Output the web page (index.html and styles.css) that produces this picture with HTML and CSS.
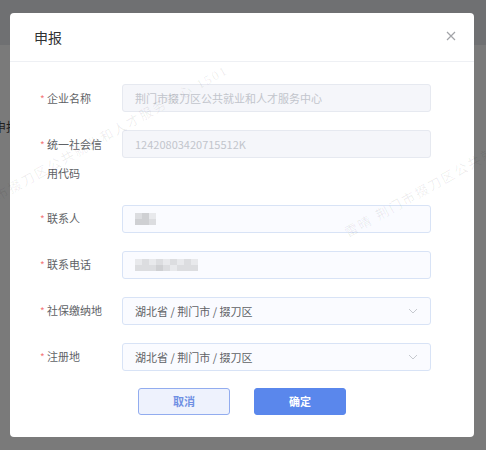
FILE: index.html
```html
<!DOCTYPE html>
<html lang="zh-CN">
<head>
<meta charset="utf-8">
<title>申报</title>
<link rel="stylesheet" href="styles.css">
</head>
<body>
<div class="page">
  <div class="page-header"></div>
  <div class="page-body">
    <span class="page-text">申报</span>
  </div>
</div>

<div class="dialog">
  <div class="dialog-header">
    <span class="dialog-title">申报</span>
    <svg class="close" width="10" height="10" viewBox="0 0 10 10"><path d="M1 1L9 9M9 1L1 9" stroke="#a2a4a8" stroke-width="1.2" fill="none"/></svg>
  </div>
  <div class="dialog-body">
    <div class="form-item">
      <div class="label"><span class="star">*</span><span class="label-text">企业名称</span></div>
      <div class="control"><div class="input disabled">荆门市掇刀区公共就业和人才服务中心</div></div>
    </div>
    <div class="form-item">
      <div class="label"><span class="star">*</span><span class="label-text">统一社会信用代码</span></div>
      <div class="control"><div class="input disabled">12420803420715512K</div></div>
    </div>
    <div class="form-item">
      <div class="label"><span class="star">*</span><span class="label-text">联系人</span></div>
      <div class="control"><div class="input">
        <div class="mosaic">
          <i class="m2"></i><i class="m1"></i><i class="m3"></i>
          <i class="m1"></i><i class="m1"></i><i class="m2"></i>
        </div>
      </div></div>
    </div>
    <div class="form-item">
      <div class="label"><span class="star">*</span><span class="label-text">联系电话</span></div>
      <div class="control"><div class="input">
        <div class="mosaic wide">
          <i class="m3"></i><i class="m2"></i><i class="m3"></i><i class="m2"></i><i class="m3"></i><i class="m2"></i><i class="m3"></i><i class="m2"></i><i class="m3"></i>
          <i class="m2"></i><i class="m2"></i><i class="m2"></i><i class="m1"></i><i class="m2"></i><i class="m3"></i><i class="m2"></i><i class="m2"></i><i class="m2"></i>
        </div>
      </div></div>
    </div>
    <div class="form-item">
      <div class="label"><span class="star">*</span><span class="label-text">社保缴纳地</span></div>
      <div class="control"><div class="input select"><span>湖北省 / 荆门市 / 掇刀区</span>
        <svg class="arrow" width="10" height="6" viewBox="0 0 10 6"><path d="M1 1L5 5L9 1" stroke="#c6c9cf" stroke-width="1" fill="none"/></svg>
      </div></div>
    </div>
    <div class="form-item last">
      <div class="label"><span class="star">*</span><span class="label-text">注册地</span></div>
      <div class="control"><div class="input select"><span>湖北省 / 荆门市 / 掇刀区</span>
        <svg class="arrow" width="10" height="6" viewBox="0 0 10 6"><path d="M1 1L5 5L9 1" stroke="#c6c9cf" stroke-width="1" fill="none"/></svg>
      </div></div>
    </div>
    <div class="footer">
      <button class="btn btn-cancel">取消</button>
      <button class="btn btn-primary">确定</button>
    </div>
  </div>
</div>

<div class="watermarks">
  <span class="wm wm1">荆门市掇刀区公共就业和人才服务中心 1501</span>
  <span class="wm wm2">雷晴 荆门市掇刀区公共就业和人才服务中心 1501</span>
</div>
</body>
</html>
```

FILE: styles.css
```css
* { box-sizing: border-box; }
html, body { margin: 0; padding: 0; }
body {
  width: 486px;
  height: 450px;
  overflow: hidden;
  position: relative;
  background: #7a7a7a;
  font-family: "Noto Sans CJK SC", "Noto Sans", sans-serif;
}
.page { position: absolute; inset: 0; display: flex; flex-direction: column; }
.page-header { height: 45px; background: #6f7072; }
.page-body { flex: 1; position: relative; }
.page-text {
  position: absolute;
  left: -6px;
  top: 73px;
  font-size: 12px;
  color: #1f1f1f;
}
.dialog {
  position: absolute;
  left: 10px;
  top: 13px;
  width: 464px;
  height: 424px;
  background: #fff;
  border-radius: 4px;
  display: flex;
  flex-direction: column;
}
.dialog-header {
  height: 49px;
  padding: 0 18px 0 24px;
  display: flex;
  align-items: center;
  justify-content: space-between;
  border-bottom: 1px solid #eef0f4;
}
.dialog-title {
  font-size: 14px;
  color: #303133;
  line-height: 20px;
  margin-top: -1px;
}
.close { margin-top: -3px; }
.dialog-body {
  padding: 22px 43px 0 24px;
}
.form-item {
  display: flex;
  align-items: flex-start;
  margin-bottom: 18px;
}
.form-item.last { margin-bottom: 17px; }
.label {
  width: 88px;
  flex: none;
  display: flex;
  padding-left: 6px;
  padding-right: 14px;
  font-size: 11px;
  line-height: 29px;
  margin-bottom: -1px;
  margin-top: -0.5px;
  color: #606266;
}
.star {
  color: #f47a7a;
  width: 7px;
  flex: none;
  font-size: 10px;
}
.label-text { flex: 1; min-width: 0; }
.control { flex: 1; }
.input {
  height: 28px;
  border: 1px solid #d8e3f6;
  background: #fafbff;
  border-radius: 3px;
  padding: 0 12px;
  font-size: 11px;
  color: #606266;
  display: flex;
  align-items: center;
}
.input.disabled {
  background: #f5f6fa;
  border-color: #e6e9f0;
  color: #c2c5cc;
}
.select { justify-content: space-between; }
.mosaic {
  display: grid;
  grid-template-columns: repeat(3, 7px);
  grid-template-rows: repeat(2, 6px);
  filter: blur(0.6px);
  margin-top: 1px;
}
.mosaic.wide { grid-template-columns: repeat(9, 7px); }
.mosaic i { display: block; }
.m1 { background: #cfd0d3; }
.m2 { background: #dcdde0; }
.m3 { background: #e8e9ec; }
.footer {
  display: flex;
  justify-content: center;
  gap: 24px;
  padding-left: 19px;
}
.btn {
  width: 92px;
  height: 27px;
  border-radius: 3px;
  font-family: inherit;
  font-size: 11px;
  font-weight: 700;
  padding: 0;
  cursor: pointer;
}
.btn-cancel {
  background: #eef2fd;
  border: 1px solid #92acef;
  color: #6f8fe3;
}
.btn-primary {
  background: #5a87ec;
  border: 1px solid #5a87ec;
  color: #fff;
}
.watermarks { position: absolute; inset: 0; pointer-events: none; }
.wm {
  position: absolute;
  white-space: nowrap;
  font-family: "Liberation Serif", "Noto Sans CJK SC", serif;
  font-size: 13px;
  letter-spacing: 2px;
  line-height: 16px;
  color: rgba(0, 0, 0, 0.075);
  transform-origin: 0 50%;
  transform: rotate(-29deg);
}
.wm1 { left: -30px; top: 204px; }
.wm2 { left: 346px; top: 226px; }
```
